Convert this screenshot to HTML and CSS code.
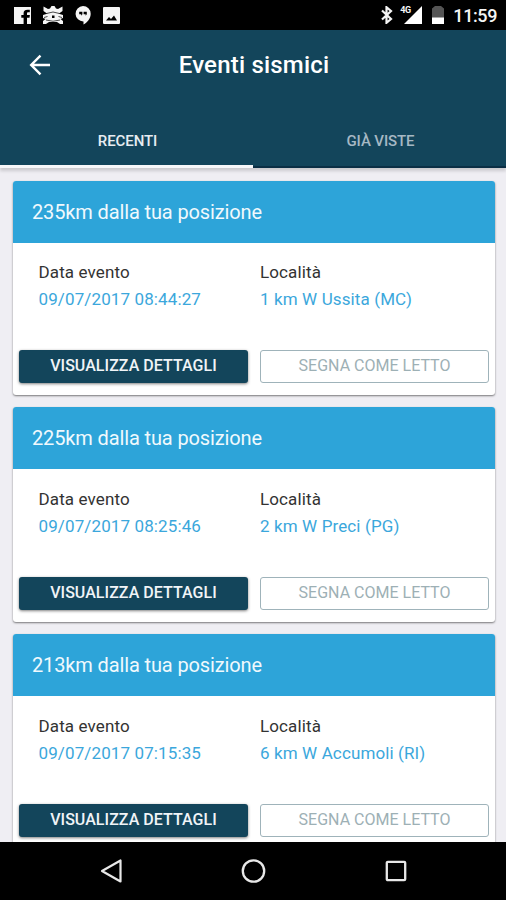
FILE: index.html
```
<!DOCTYPE html>
<html lang="it">
<head>
  <meta charset="UTF-8">
  <title>Eventi sismici</title>
  <meta name="viewport" content="width=device-width, initial-scale=1.0">
  <link rel="stylesheet" href="styles.css">
</head>
<body>
  <div class="screen">

    <!-- Status bar -->
    <div class="status-bar">
      <div class="notifications">
        <svg width="17" height="17" viewBox="0 0 17 17">
          <path fill="#f5f5f5" d="M0 0h17v17h-4v-6.300h2.500l.4-2.600h-2.900V6.500c0-.9.400-1.300 1.300-1.300h1.500V2.700h-2.200c-2.900 0-4 1.300-4 3.500v1.900H7.300v2.600h2.300V17H0z"/>
        </svg>
        <svg width="20" height="18" viewBox="0 0 20 18">
          <path fill="#f5f5f5" d="M.5.500L5 3l2-.5L8.500 0h3L13 2.500l2 .5L19.500.500V5L16 7.500h-1l5 1.500v3l-2.500 1L20 15v3h-3l-3-2H6l-3 2H0v-3l2.500-2L0 12V9l5-1.500H4L.5 5z"/>
          <path fill="none" stroke="#000" stroke-width=".7" d="M3.500 7.500q6.500-3 13 0M1 11.500l3.500-1M19 11.500l-3.500-1M3 14q7 2.500 14 0"/>
          <path fill="#000" d="M9 9.500h2.500V12H9z"/>
        </svg>
        <svg width="16" height="19" viewBox="0 0 16 19">
          <path fill="#f5f5f5" d="M8 0a7.700 7.700 0 0 1 7.700 7.700c0 4.800-3.500 8.800-7.200 10.900v-3.200A7.700 7.700 0 1 1 8 0z"/>
          <path fill="#000" d="M4.200 5.700h3.200v2.600L6.200 9.800V8.200h-2zM8.600 5.700h3.200v2.600l-1.200 1.500V8.200h-2z"/>
        </svg>
        <svg width="17" height="17" viewBox="0 0 17 17">
          <rect width="17" height="17" rx="1" fill="#f5f5f5"/>
          <path fill="#000" d="M3 13.500l3-3.500 2 2 3-3.500 3 5z"/>
        </svg>
      </div>
      <div class="system">
        <svg class="bluetooth" width="12" height="18" viewBox="0 0 12 18">
          <path fill="none" stroke="#f5f5f5" stroke-width="2.200" d="M1 4.500l9 8.500-4.500 3.800V1.200L10 5l-9 8.500"/>
        </svg>
        <div class="signal">
          <svg width="18" height="18" viewBox="0 0 18 18">
            <path fill="#fff" d="M18 0v18H0z"/>
          </svg>
          <span class="network">4G</span>
        </div>
        <svg class="battery" width="12" height="18" viewBox="0 0 12 18">
          <path fill="#555" d="M3 0h6l3 2.500V12H0V2.500z"/>
          <path fill="#fff" d="M0 11.500h12V18H0z"/>
        </svg>
        <span class="clock">11:59</span>
      </div>
    </div>

    <!-- Header -->
    <header class="toolbar">
      <svg class="back" width="22" height="22" viewBox="0 0 22 22">
        <path fill="none" stroke="#fff" stroke-width="2.400" d="M21 11H3M11.500 1.700L2.200 11l9.300 9.300"/>
      </svg>
      <h1>Eventi sismici</h1>
    </header>
    <nav class="tabs">
      <div class="tab active"><span>RECENTI</span></div>
      <div class="tab"><span>GIÀ VISTE</span></div>
    </nav>

    <!-- Event list -->
    <main class="list">
      <div class="card">
        <h2>235km dalla tua posizione</h2>
        <div class="info">
          <div>
            <div class="label">Data evento</div>
            <div class="value">09/07/2017 08:44:27</div>
          </div>
          <div>
            <div class="label">Località</div>
            <div class="value">1 km W Ussita (MC)</div>
          </div>
        </div>
        <div class="actions">
          <button class="btn details">VISUALIZZA DETTAGLI</button>
          <button class="btn read">SEGNA COME LETTO</button>
        </div>
      </div>

      <div class="card">
        <h2>225km dalla tua posizione</h2>
        <div class="info">
          <div>
            <div class="label">Data evento</div>
            <div class="value">09/07/2017 08:25:46</div>
          </div>
          <div>
            <div class="label">Località</div>
            <div class="value">2 km W Preci (PG)</div>
          </div>
        </div>
        <div class="actions">
          <button class="btn details">VISUALIZZA DETTAGLI</button>
          <button class="btn read">SEGNA COME LETTO</button>
        </div>
      </div>

      <div class="card">
        <h2>213km dalla tua posizione</h2>
        <div class="info">
          <div>
            <div class="label">Data evento</div>
            <div class="value">09/07/2017 07:15:35</div>
          </div>
          <div>
            <div class="label">Località</div>
            <div class="value">6 km W Accumoli (RI)</div>
          </div>
        </div>
        <div class="actions">
          <button class="btn details">VISUALIZZA DETTAGLI</button>
          <button class="btn read">SEGNA COME LETTO</button>
        </div>
      </div>
    </main>

    <!-- Android navigation -->
    <div class="nav-bar">
      <svg width="24" height="26" viewBox="0 0 24 26">
        <path fill="none" stroke="#e8e8e8" stroke-width="2.200" stroke-linejoin="round" d="M20.500 2.500v21L2 13z"/>
      </svg>
      <svg width="26" height="26" viewBox="0 0 26 26">
        <circle cx="12.500" cy="13" r="10.700" fill="none" stroke="#e8e8e8" stroke-width="2.300"/>
      </svg>
      <svg width="24" height="24" viewBox="0 0 24 24">
        <rect x="2.800" y="2.800" width="18.400" height="18.400" rx="1" fill="none" stroke="#e8e8e8" stroke-width="2.300"/>
      </svg>
    </div>
  </div>
</body>
</html>
```
FILE: styles.css
```
* {
  box-sizing: border-box;
}
body {
  margin: 0;
  font-family: Roboto, sans-serif;
  background-color: #000;
}
svg {
  display: block;
}
.screen {
  display: flex;
  flex-direction: column;
  width: 506px;
  height: 900px;
  overflow: hidden;
}

/* Status bar */
.status-bar {
  display: flex;
  justify-content: space-between;
  align-items: center;
  flex: none;
  height: 30px;
  padding: 0 9px 0 14px;
  background-color: #000;
}
.notifications, .system {
  display: flex;
  align-items: center;
}
.notifications {
  gap: 12px;
}
.bluetooth {
  margin-right: 11px;
}
.signal {
  position: relative;
  margin-right: 10px;
}
.network {
  position: absolute;
  top: -1px;
  left: -4px;
  color: #f5f5f5;
  font-size: 9px;
  font-weight: 700;
  line-height: 10px;
  letter-spacing: -0.5px;
}
.battery {
  margin-right: 9px;
}
.clock {
  padding-top: 2px;
  color: #f5f5f5;
  font-size: 18px;
  font-weight: 500;
  line-height: 28px;
  letter-spacing: -0.4px;
}

/* Header */
.toolbar {
  display: flex;
  align-items: center;
  flex: none;
  height: 84px;
  padding: 0 29px 14px;
  background-color: #13455b;
}
.toolbar h1 {
  flex: 1;
  margin: 0 20px 0 0;
  color: #fff;
  font-size: 24px;
  font-weight: 500;
  letter-spacing: 0.2px;
  text-align: center;
}
.tabs {
  display: flex;
  flex: none;
  height: 53.5px;
  background-color: #13455b;
  box-shadow: 0 3px 3px rgba(0,0,0,0.15);
  z-index: 1;
}
.tab {
  flex: 1;
  padding-left: 2px;
  color: #a6b8c4;
  font-size: 15px;
  font-weight: 500;
  letter-spacing: -0.1px;
  line-height: 54px;
  text-align: center;
  border-bottom: 2px solid #0b2f45;
}
.tab.active {
  color: #e7edf2;
  border-bottom: 3px solid #f7f7f9;
}

/* Event list */
.list {
  flex: 1;
  min-height: 0;
  padding: 13px 11px 0 13px;
  overflow: hidden;
  background-color: #efeef3;
}
.card {
  height: 214.2px;
  margin-bottom: 12.7px;
  background-color: #fff;
  border-radius: 3px;
  box-shadow: 0 1px 2px rgba(0,0,0,0.5);
  overflow: hidden;
}
.card h2 {
  height: 62px;
  margin: 0;
  padding-left: 19px;
  background-color: #2da4d9;
  color: #f0f9fd;
  font-size: 20px;
  font-weight: 400;
  line-height: 62px;
  letter-spacing: -0.13px;
}
.info {
  display: grid;
  grid-template-columns: 221.5px 1fr;
  height: 107.5px;
  padding: 16.6px 0 0 25.5px;
  font-size: 17px;
  line-height: 27px;
  letter-spacing: 0.12px;
}
.label {
  color: #333;
}
.value {
  color: #3ba7dc;
}
.actions {
  display: grid;
  grid-template-columns: 229px 229px;
  gap: 12px;
  padding-left: 6px;
}
.btn {
  height: 33px;
  padding: 0 0 2px;
  font-family: inherit;
  font-size: 16px;
  border-radius: 3px;
}
.details {
  background-color: #13455b;
  color: #f0f4f7;
  font-weight: 500;
  letter-spacing: 0.05px;
  border: none;
  box-shadow: 0 1px 3px rgba(0,0,0,0.5);
}
.read {
  background-color: #fff;
  color: #9db0b5;
  border: 1px solid #9fb3ba;
}

/* Android navigation */
.nav-bar {
  display: flex;
  justify-content: space-between;
  align-items: center;
  flex: none;
  height: 58px;
  padding: 0 98px 0 100px;
  background-color: #000;
}
```
